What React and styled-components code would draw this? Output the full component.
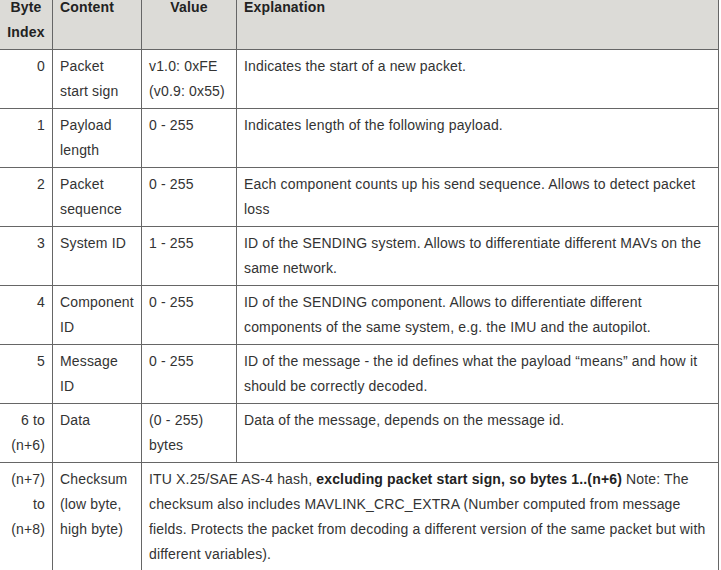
import React from "react";
import styled, { createGlobalStyle } from "styled-components";

const Global = createGlobalStyle`
  html, body {
    margin: 0;
    padding: 0;
    background: #ffffff;
    overflow: hidden;
  }
  body {
    font-family: "Liberation Sans", Arial, sans-serif;
  }
`;

const Page = styled.div`
  width: 721px;
  height: 570px;
  overflow: hidden;
`;

const Table = styled.table`
  margin: -10px 0 0 -1px;
  width: 720px;
  table-layout: fixed;
  border-collapse: separate;
  border-spacing: 0;
  border-top: 1px solid #666;
  border-left: 1px solid #666;
  font-family: "Liberation Sans", Arial, sans-serif;
  font-size: 14px;
  line-height: 25px;
  letter-spacing: 0.16px;
  color: #333;
`;

const Col = styled.col`
  width: ${(p) => p.$w}px;
`;

const Th = styled.th`
  box-sizing: border-box;
  background: #dcdbd7;
  color: #222;
  font-weight: bold;
  text-align: ${(p) => p.$align || "left"};
  vertical-align: top;
  padding: 4px 7px 4px 7px;
  border-right: 1px solid #666;
  border-bottom: 1px solid #666;
  height: 59px;
`;

const Td = styled.td`
  box-sizing: border-box;
  text-align: ${(p) => p.$align || "left"};
  vertical-align: top;
  padding: 4px 7px 4px 7px;
  border-right: 1px solid #666;
  border-bottom: 1px solid #666;
  height: 59px;
`;

const Strong = styled.strong`
  font-weight: bold;
  color: #222;
`;

const rows = [
  {
    idx: <>0</>,
    content: <>Packet<br />start sign</>,
    value: <>v1.0: 0xFE<br />(v0.9: 0x55)</>,
    expl: <>Indicates the start of a new packet.</>,
  },
  {
    idx: <>1</>,
    content: <>Payload<br />length</>,
    value: <>0 - 255</>,
    expl: <>Indicates length of the following payload.</>,
  },
  {
    idx: <>2</>,
    content: <>Packet<br />sequence</>,
    value: <>0 - 255</>,
    expl: <>Each component counts up his send sequence. Allows to detect packet loss</>,
  },
  {
    idx: <>3</>,
    content: <>System ID</>,
    value: <>1 - 255</>,
    expl: <>ID of the SENDING system. Allows to differentiate different MAVs on the same network.</>,
  },
  {
    idx: <>4</>,
    content: <>Component<br />ID</>,
    value: <>0 - 255</>,
    expl: <>ID of the SENDING component. Allows to differentiate different components of the same system, e.g. the IMU and the autopilot.</>,
  },
  {
    idx: <>5</>,
    content: <>Message<br />ID</>,
    value: <>0 - 255</>,
    expl: <>ID of the message - the id defines what the payload “means” and how it should be correctly decoded.</>,
  },
  {
    idx: <>6 to<br />(n+6)</>,
    content: <>Data</>,
    value: <>(0 - 255)<br />bytes</>,
    expl: <>Data of the message, depends on the message id.</>,
  },
  {
    idx: <>(n+7)<br />to<br />(n+8)</>,
    content: <>Checksum<br />(low byte,<br />high byte)</>,
    value: null,
    expl: (
      <>
        ITU X.25/SAE AS-4 hash, <Strong>excluding packet start sign, so bytes 1..(n+6)</Strong> Note: The
        checksum also includes MAVLINK_CRC_EXTRA (Number computed from message fields. Protects the
        packet from decoding a different version of the same packet but with different variables).
      </>
    ),
  },
];

export default function App() {
  return (
    <Page>
      <Global />
      <Table>
        <colgroup>
          <Col $w={53} />
          <Col $w={89} />
          <Col $w={95} />
          <Col $w={482} />
        </colgroup>
        <thead>
          <tr>
            <Th $align="center">Byte<br />Index</Th>
            <Th>Content</Th>
            <Th $align="center">Value</Th>
            <Th>Explanation</Th>
          </tr>
        </thead>
        <tbody>
          {rows.map((r, i) =>
            r.value === null ? (
              <tr key={i}>
                <Td $align="right">{r.idx}</Td>
                <Td>{r.content}</Td>
                <Td colSpan={2}>{r.expl}</Td>
              </tr>
            ) : (
              <tr key={i}>
                <Td $align="right">{r.idx}</Td>
                <Td>{r.content}</Td>
                <Td>{r.value}</Td>
                <Td>{r.expl}</Td>
              </tr>
            )
          )}
        </tbody>
      </Table>
    </Page>
  );
}
